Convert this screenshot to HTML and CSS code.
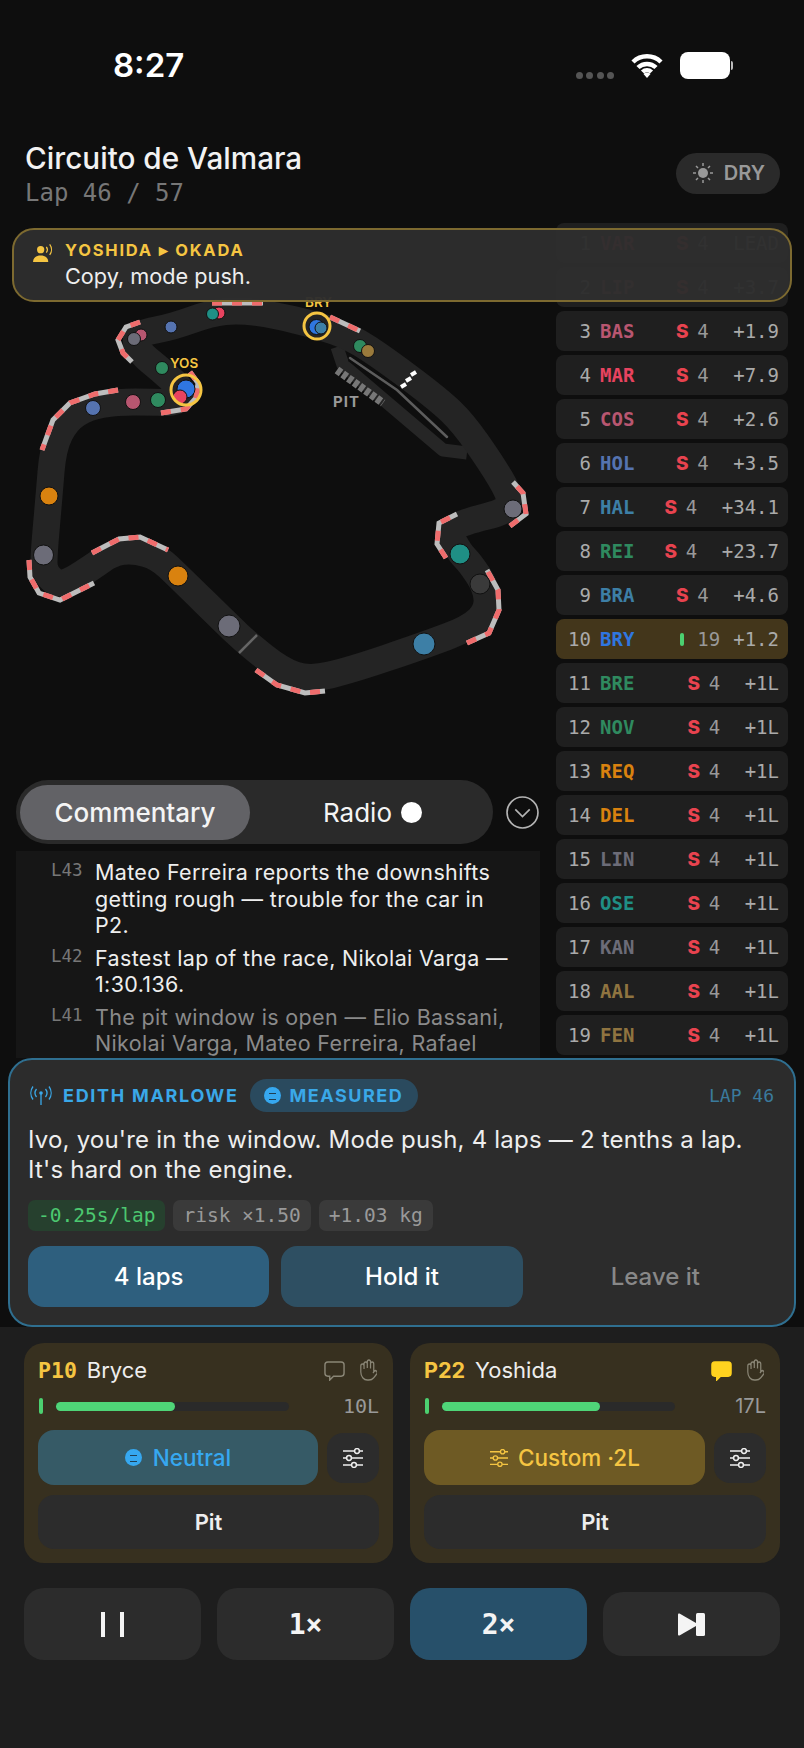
FILE: index.html
```html
<!DOCTYPE html>
<html lang="en">
<head>
    <meta charset="UTF-8">
    <meta name="viewport" content="width=device-width, initial-scale=1.0">
    <title>Circuito de Valmara</title>
    <link rel="stylesheet" href="styles.css">
</head>
<body>
    <svg class="sprites" width="0" height="0">
        <symbol id="i-hand" viewBox="2 1 21 22" preserveAspectRatio="none">
            <path transform="matrix(-1 0 0 1 25 0)" d="M18 11V6a2 2 0 0 0-2-2a2 2 0 0 0-2 2M14 10V4a2 2 0 0 0-2-2a2 2 0 0 0-2 2v2M10 10.5V6a2 2 0 0 0-2-2a2 2 0 0 0-2 2v8M18 8a2 2 0 1 1 4 0v6a8 8 0 0 1-8 8h-2c-2.8 0-4.5-.86-5.99-2.34l-3.6-3.6a2 2 0 0 1 2.83-2.82L7 15"/>
        </symbol>
        <symbol id="i-chat" viewBox="0 0 22 22">
            <path d="M4 2h14a3 3 0 0 1 3 3v9a3 3 0 0 1-3 3H10l-4 4v-4H4a3 3 0 0 1-3-3V5a3 3 0 0 1 3-3z"/>
        </symbol>
        <symbol id="i-sliders" viewBox="0 0 22 20">
            <path d="M1 3h20M1 10h20M1 17h20"/>
            <circle cx="15" cy="3" r="2.4"/>
            <circle cx="7" cy="10" r="2.4"/>
            <circle cx="12" cy="17" r="2.4"/>
        </symbol>
    </svg>

    <div class="phone">
        <div class="status-bar">
            <span class="clock">8:27</span>
            <div class="status-icons">
                <div class="signal"><i></i><i></i><i></i><i></i></div>
                <svg class="wifi" viewBox="0 0 32 25">
                    <path d="M2 9a20 20 0 0 1 28 0M7 14.500a13 13 0 0 1 18 0M11.500 19a6.500 6.500 0 0 1 9 0"/>
                    <path class="wifi-tip" d="M16 25l-3.500-4a5 5 0 0 1 7 0z"/>
                </svg>
                <div class="battery"></div>
            </div>
        </div>

        <header class="race-header">
            <div class="race-title">
                <h1>Circuito de Valmara</h1>
                <p class="lap-count">Lap 46 / 57</p>
            </div>
            <div class="weather">
                <svg viewBox="0 0 22 22">
                    <circle class="sun-core" cx="11" cy="11" r="5"/>
                    <path d="M11 1v3M11 18v3M1 11h3M18 11h3M4 4l2 2M16 16l2 2M4 18l2-2M16 6l2-2"/>
                </svg>
                <span>DRY</span>
            </div>
        </header>

        <div class="radio-toast">
            <svg class="toast-icon" viewBox="0 0 22 20">
                <circle cx="8" cy="6" r="3.800"/>
                <path d="M0 19c0-4.500 3-7 8-7s8 2.500 8 7z"/>
                <path class="wave" d="M14 3a5 5 0 0 1 0 6M17.500 .5a9 9 0 0 1 0 11"/>
            </svg>
            <div>
                <div class="toast-title">YOSHIDA ▸ OKADA</div>
                <div class="toast-text">Copy, mode push.</div>
            </div>
        </div>

        <main class="race-main">
            <section class="left-col">
                <svg class="track-map" viewBox="16 -67 524 547">
                    <defs>
                        <g id="kerbs">
                            <polyline points="256,380 277,395 305,403 325,401"/>
                            <polyline points="467,353 489,343 499,320 498,300 487,280"/>
                            <polyline points="446,268 437,254 439,233 457,224"/>
                            <polyline points="510,236 526,224 523,203 513,192"/>
                            <polyline points="330,27 360,41"/>
                            <polyline points="212,13 263,13"/>
                            <polyline points="140,32 126,37 118,50 123,63 132,72"/>
                            <polyline points="118,100 95,104 70,113 53,130 42,160"/>
                            <polyline points="161,123 186,119 196,108 198,93 190,82"/>
                            <polyline points="29,270 30,287 39,303 60,310 94,293"/>
                            <polyline points="92,263 119,249 140,247 168,260"/>
                        </g>
                    </defs>
                    <polyline class="pit-road" points="337,57 343,75 390,115 443,160 467,163"/>
                    <path class="track" d="M264,366.500 Q281,380 295,385 Q309,390 330,385 Q351,380 388,367.500 Q425,355 447.500,346.500 Q470,338 479,329 Q488,320 487,308.500 Q486,297 478,285 Q470,273 465,268 Q460,263 454.500,253 Q449,243 454.500,238 Q460,233 486,226.500 Q512,220 510.500,211.500 Q509,203 500,188 Q491,173 477,153 Q463,133 451,121.500 Q439,110 412.500,90 Q386,70 368.500,58.500 Q351,47 333.500,41 Q316,35 295,30 Q274,25 256.500,22.500 Q239,20 225,21.500 Q211,23 191.500,30 Q172,37 156,40 Q140,43 137.500,46.500 Q135,50 137.500,56.500 Q140,63 150.500,71.500 Q161,80 173.500,91.500 Q186,103 180.500,108 Q175,113 164.500,112.500 Q154,112 135,112 Q116,112 102,114.500 Q88,117 77.500,123.500 Q67,130 60,143.500 Q53,157 51,182 Q49,207 46.500,235 Q44,263 44,273 Q44,283 52.500,290 Q61,297 76,287.500 Q91,278 101.500,270.500 Q112,263 122.500,261.500 Q133,260 145.500,263.500 Q158,267 168.500,277 Q179,287 203.500,311 Q228,335 237.500,344 Q247,353 264,366.500 Z"/>
                    <polyline class="pit-gap" points="350,68 397,100 447,147"/>
                    <polyline class="pit-wall" points="350,68 397,100 447,147"/>
                    <line class="pit-boxes" x1="337" y1="80" x2="383" y2="113"/>
                    <g class="pit-entry">
                        <line x1="401" y1="97" x2="406" y2="94"/>
                        <line x1="406" y1="91" x2="411" y2="88"/>
                        <line x1="411" y1="85" x2="416" y2="82"/>
                    </g>
                    <line class="finish" x1="239" y1="363" x2="257" y2="345"/>
                    <use class="kerb-base" href="#kerbs"/>
                    <use class="kerb-dash" href="#kerbs"/>

                    <text class="pit-label" x="333" y="117">PIT</text>
                    <text class="car-label" x="170" y="78">YOS</text>
                    <text class="car-label" x="305" y="17">BRY</text>

                    <g class="cars">
                        <circle class="c-orange" cx="49" cy="206" r="9"/>
                        <circle class="c-grey" cx="43.500" cy="265" r="10"/>
                        <circle class="c-orange" cx="178" cy="286" r="10"/>
                        <circle class="c-grey" cx="229" cy="336" r="11"/>
                        <circle class="c-sky" cx="424" cy="354" r="11"/>
                        <circle class="c-dark" cx="480" cy="294" r="10"/>
                        <circle class="c-teal" cx="460" cy="264" r="10"/>
                        <circle class="c-grey" cx="513" cy="219" r="9"/>
                        <circle class="c-green" cx="360" cy="56" r="6.500"/>
                        <circle class="c-brown" cx="368" cy="61" r="6.500"/>
                        <circle class="c-red" cx="219" cy="23" r="6"/>
                        <circle class="c-teal" cx="212.500" cy="24" r="6"/>
                        <circle class="c-blue" cx="171" cy="37" r="6"/>
                        <circle class="c-pink" cx="141" cy="45" r="6"/>
                        <circle class="c-grey" cx="134" cy="49" r="6.500"/>
                        <circle class="c-green" cx="162" cy="78" r="6.500"/>
                        <circle class="c-green" cx="158" cy="110" r="7.500"/>
                        <circle class="c-pink" cx="133" cy="112" r="7.500"/>
                        <circle class="c-blue" cx="93" cy="118" r="7.500"/>
                        <circle class="c-bright" cx="316.500" cy="37" r="7.500"/>
                        <circle class="c-sky" cx="321" cy="38" r="6"/>
                        <circle class="c-bright" cx="186" cy="99" r="9"/>
                        <circle class="c-red" cx="180" cy="107" r="7"/>
                    </g>
                    <circle class="car-ring" cx="317" cy="36" r="13"/>
                    <circle class="car-ring" cx="186" cy="100" r="15"/>
                </svg>

                <div class="feed-tabs-row">
                    <div class="feed-tabs">
                        <div class="feed-tab active">Commentary</div>
                        <div class="feed-tab radio">Radio <span class="live-dot"></span></div>
                    </div>
                    <svg class="collapse" viewBox="0 0 32 32">
                        <circle cx="16" cy="16" r="15"/>
                        <path d="M9 13l7 7 7-7"/>
                    </svg>
                </div>

                <div class="feed">
                    <div class="feed-item">
                        <span class="feed-lap">L43</span>
                        <p>Mateo Ferreira reports the downshifts getting rough — trouble for the car in P2.</p>
                    </div>
                    <div class="feed-item">
                        <span class="feed-lap">L42</span>
                        <p>Fastest lap of the race, Nikolai Varga — 1:30.136.</p>
                    </div>
                    <div class="feed-item faded">
                        <span class="feed-lap">L41</span>
                        <p>The pit window is open — Elio Bassani, Nikolai Varga, Mateo Ferreira, Rafael</p>
                    </div>
                </div>
            </section>

            <aside class="standings">
                <div class="row"><span class="pos">1</span><span class="code c-red">VAR</span><span class="tyre">S</span><span class="laps">4</span><span class="gap">LEAD</span></div>
                <div class="row"><span class="pos">2</span><span class="code c-pink">LIP</span><span class="tyre">S</span><span class="laps">4</span><span class="gap">+3.7</span></div>
                <div class="row"><span class="pos">3</span><span class="code c-pink">BAS</span><span class="tyre">S</span><span class="laps">4</span><span class="gap">+1.9</span></div>
                <div class="row"><span class="pos">4</span><span class="code c-red">MAR</span><span class="tyre">S</span><span class="laps">4</span><span class="gap">+7.9</span></div>
                <div class="row"><span class="pos">5</span><span class="code c-pink">COS</span><span class="tyre">S</span><span class="laps">4</span><span class="gap">+2.6</span></div>
                <div class="row"><span class="pos">6</span><span class="code c-blue">HOL</span><span class="tyre">S</span><span class="laps">4</span><span class="gap">+3.5</span></div>
                <div class="row"><span class="pos">7</span><span class="code c-sky">HAL</span><span class="tyre">S</span><span class="laps">4</span><span class="gap">+34.1</span></div>
                <div class="row"><span class="pos">8</span><span class="code c-green">REI</span><span class="tyre">S</span><span class="laps">4</span><span class="gap">+23.7</span></div>
                <div class="row"><span class="pos">9</span><span class="code c-sky">BRA</span><span class="tyre">S</span><span class="laps">4</span><span class="gap">+4.6</span></div>
                <div class="row mine"><span class="pos">10</span><span class="code c-bright">BRY</span><span class="tyre"><i class="tyre-bar"></i></span><span class="laps">19</span><span class="gap">+1.2</span></div>
                <div class="row"><span class="pos">11</span><span class="code c-green">BRE</span><span class="tyre">S</span><span class="laps">4</span><span class="gap">+1L</span></div>
                <div class="row"><span class="pos">12</span><span class="code c-green">NOV</span><span class="tyre">S</span><span class="laps">4</span><span class="gap">+1L</span></div>
                <div class="row"><span class="pos">13</span><span class="code c-orange">REQ</span><span class="tyre">S</span><span class="laps">4</span><span class="gap">+1L</span></div>
                <div class="row"><span class="pos">14</span><span class="code c-orange">DEL</span><span class="tyre">S</span><span class="laps">4</span><span class="gap">+1L</span></div>
                <div class="row"><span class="pos">15</span><span class="code c-grey">LIN</span><span class="tyre">S</span><span class="laps">4</span><span class="gap">+1L</span></div>
                <div class="row"><span class="pos">16</span><span class="code c-teal">OSE</span><span class="tyre">S</span><span class="laps">4</span><span class="gap">+1L</span></div>
                <div class="row"><span class="pos">17</span><span class="code c-grey">KAN</span><span class="tyre">S</span><span class="laps">4</span><span class="gap">+1L</span></div>
                <div class="row"><span class="pos">18</span><span class="code c-brown">AAL</span><span class="tyre">S</span><span class="laps">4</span><span class="gap">+1L</span></div>
                <div class="row"><span class="pos">19</span><span class="code c-brown">FEN</span><span class="tyre">S</span><span class="laps">4</span><span class="gap">+1L</span></div>
            </aside>
        </main>

        <section class="engineer-card">
            <div class="engineer-head">
                <svg class="antenna" viewBox="0 0 22 20">
                    <circle cx="11" cy="7" r="1.800"/>
                    <path d="M11 8v11M6.500 3a6.500 6.500 0 0 0 0 8M15.500 3a6.500 6.500 0 0 1 0 8M3 .5a11 11 0 0 0 0 13M19 .5a11 11 0 0 1 0 13"/>
                </svg>
                <span class="engineer-name">EDITH MARLOWE</span>
                <span class="tone"><i class="neutral-dot"></i>MEASURED</span>
                <span class="engineer-lap">LAP 46</span>
            </div>
            <p class="engineer-msg">Ivo, you're in the window. Mode push, 4 laps — 2 tenths a lap. It's hard on the engine.</p>
            <div class="chips">
                <span class="chip good">-0.25s/lap</span>
                <span class="chip">risk ×1.50</span>
                <span class="chip">+1.03 kg</span>
            </div>
            <div class="answers">
                <button class="answer primary">4 laps</button>
                <button class="answer secondary">Hold it</button>
                <button class="answer plain">Leave it</button>
            </div>
        </section>

        <footer class="controls">
            <div class="drivers">
                <div class="driver-card">
                    <div class="driver-head">
                        <span class="driver-pos mono">P10</span>
                        <span class="driver-name">Bryce</span>
                        <svg class="chat"><use href="#i-chat"/></svg>
                        <svg class="hand"><use href="#i-hand"/></svg>
                    </div>
                    <div class="meter">
                        <i class="meter-tick"></i>
                        <div class="meter-track"><div class="meter-fill" style="width: 51%"></div></div>
                        <span class="meter-laps mono">10L</span>
                    </div>
                    <div class="mode-row">
                        <button class="mode neutral"><i class="neutral-dot"></i>Neutral</button>
                        <button class="tune"><svg class="sliders"><use href="#i-sliders"/></svg></button>
                    </div>
                    <button class="pit">Pit</button>
                </div>

                <div class="driver-card">
                    <div class="driver-head">
                        <span class="driver-pos">P22</span>
                        <span class="driver-name">Yoshida</span>
                        <svg class="chat on"><use href="#i-chat"/></svg>
                        <svg class="hand"><use href="#i-hand"/></svg>
                    </div>
                    <div class="meter">
                        <i class="meter-tick"></i>
                        <div class="meter-track"><div class="meter-fill" style="width: 68%"></div></div>
                        <span class="meter-laps">17L</span>
                    </div>
                    <div class="mode-row">
                        <button class="mode custom"><svg class="sliders"><use href="#i-sliders"/></svg>Custom ·2L</button>
                        <button class="tune"><svg class="sliders"><use href="#i-sliders"/></svg></button>
                    </div>
                    <button class="pit">Pit</button>
                </div>
            </div>

            <div class="playback">
                <button class="play-btn">
                    <svg class="pause" viewBox="0 0 23 25"><path d="M0 0h4v25H0zM19 0h4v25h-4z"/></svg>
                </button>
                <button class="play-btn">1×</button>
                <button class="play-btn active">2×</button>
                <button class="play-btn small">
                    <svg class="skip" viewBox="0 0 27 23"><path d="M0 1.500Q0 0 1.500 .6L18 10v3L1.500 22.400Q0 23 0 21.500z"/><rect x="18" width="9" height="23" rx="1.500"/></svg>
                </button>
            </div>
        </footer>
    </div>
</body>
</html>
```

FILE: styles.css
```css
* {
    box-sizing: border-box;
}

body {
    margin: 0;
    background-color: #0e0e0e;
    color: #eee;
    font-family: Inter, "Noto Sans", sans-serif;
}

.sprites {
    position: absolute;
}

.mono {
    font-family: "DejaVu Sans Mono", monospace;
}

.phone {
    position: relative;
    width: 804px;
    height: 1748px;
    overflow: hidden;
}

/* Status bar */
.status-bar {
    display: flex;
    justify-content: space-between;
    align-items: center;
    height: 130px;
    padding: 0 74px 0 113px;
}

.clock {
    font-size: 33px;
    font-weight: 600;
    color: #fff;
}

.status-icons {
    display: flex;
    align-items: center;
    gap: 16px;
}

.signal {
    display: flex;
    gap: 3.500px;
    margin-top: 20px;
}

.signal i {
    width: 7px;
    height: 7px;
    border-radius: 50%;
    background-color: #555;
}

.wifi {
    width: 34px;
    height: 25px;
}

.wifi path {
    fill: none;
    stroke: #fff;
    stroke-width: 4.500;
}

.wifi .wifi-tip {
    fill: #fff;
    stroke: none;
}

.battery {
    position: relative;
    width: 50px;
    height: 27px;
    border-radius: 8px;
    background-color: #fff;
}

.battery::after {
    content: "";
    position: absolute;
    left: 51px;
    top: 9px;
    width: 2px;
    height: 9px;
    border-radius: 0 2px 2px 0;
    background-color: #bbb;
}

/* Header */
.race-header {
    display: flex;
    justify-content: space-between;
    align-items: center;
    height: 93px;
    padding: 0 24px 7px 25px;
}

.race-title {
    margin-top: 2px;
}

h1 {
    margin: 0;
    font-size: 29.700px;
    line-height: 34px;
    font-weight: 500;
    color: #f2f2f2;
}

.lap-count {
    margin: 4px 0 0;
    font-family: "DejaVu Sans Mono", monospace;
    font-size: 24px;
    line-height: 28px;
    color: #777;
}

.weather {
    display: flex;
    align-items: center;
    gap: 10px;
    height: 41px;
    padding: 0 15px 0 16px;
    border-radius: 21px;
    background-color: #2a2a2a;
    font-size: 20px;
    font-weight: 600;
    color: #999;
}

.weather svg {
    width: 22px;
    height: 22px;
}

.weather path {
    stroke: #999;
    stroke-width: 1.500;
}

.sun-core {
    fill: #999;
}

/* Radio toast */
.radio-toast {
    position: absolute;
    left: 12px;
    top: 228px;
    z-index: 2;
    display: flex;
    gap: 11px;
    width: 780px;
    height: 74px;
    padding: 10px 19px;
    border: 2px solid #7d6a30;
    border-radius: 22px;
    background-color: rgba(45, 45, 45, 0.97);
}

.toast-icon {
    flex: none;
    width: 21px;
    height: 19px;
    margin-top: 4px;
    fill: #f5c542;
}

.toast-icon .wave {
    fill: none;
    stroke: #f5c542;
    stroke-width: 1.300;
}

.toast-title {
    font-size: 16.500px;
    line-height: 20px;
    font-weight: 700;
    letter-spacing: 1.800px;
    color: #f5c542;
}

.toast-text {
    margin-top: 3px;
    font-size: 21.700px;
    line-height: 26px;
    color: #eee;
}

/* Main area */
.race-main {
    display: grid;
    grid-template-columns: 524px 232px;
    gap: 16px;
    height: 835px;
    padding: 0 16px;
    overflow: hidden;
}

.left-col {
    display: flex;
    flex-direction: column;
    min-height: 0;
}

.track-map {
    flex: none;
    width: 524px;
    height: 547px;
}

.track {
    fill: none;
    stroke: #242424;
    stroke-width: 27;
    stroke-linejoin: round;
}

.pit-road {
    fill: none;
    stroke: #262626;
    stroke-width: 13;
    stroke-linejoin: round;
}

.pit-gap {
    fill: none;
    stroke: #0e0e0e;
    stroke-width: 7;
}

.pit-wall {
    fill: none;
    stroke: #5c5c5c;
    stroke-width: 2.500;
    stroke-linecap: round;
}

.pit-boxes {
    stroke: #777;
    stroke-width: 8;
    stroke-dasharray: 5 2;
}

.pit-entry line {
    stroke: #fff;
    stroke-width: 4;
}

.finish {
    stroke: #666;
    stroke-width: 2.500;
}

.kerb-base,
.kerb-dash {
    fill: none;
    stroke-width: 5;
}

.kerb-base {
    stroke: #bdbdbd;
}

.kerb-dash {
    stroke: #ef6c6c;
    stroke-dasharray: 10 10;
}

.pit-label {
    fill: #999;
    font-size: 15px;
    font-weight: 700;
    letter-spacing: 1px;
}

.car-label {
    fill: #f5c542;
    font-size: 13.500px;
    font-weight: 600;
}

.cars circle {
    stroke: #111;
    stroke-width: 1;
}

.car-ring {
    fill: none;
    stroke: #f5c542;
    stroke-width: 3;
}

/* Team colours, for car dots and driver codes */
.c-red { color: #e8435f; fill: #e8435f; }
.c-pink { color: #b85670; fill: #b85670; }
.c-blue { color: #5573b0; fill: #5573b0; }
.c-sky { color: #3d7fa6; fill: #3d7fa6; }
.c-bright { color: #2f76e0; fill: #2f76e0; }
.c-green { color: #2f8a5f; fill: #2f8a5f; }
.c-teal { color: #1f8f85; fill: #1f8f85; }
.c-orange { color: #d9820f; fill: #d9820f; }
.c-brown { color: #8f7440; fill: #9a7a3c; }
.c-grey { color: #6c6c78; fill: #6c6c78; }
.c-dark { fill: #3a3a3a; }

/* Commentary */
.feed-tabs-row {
    flex: none;
    display: flex;
    align-items: center;
    gap: 13px;
    margin-top: 10px;
}

.feed-tabs {
    display: flex;
    align-items: center;
    width: 477px;
    height: 64px;
    padding: 0 4px;
    border-radius: 32px;
    background-color: #2a2a2a;
}

.feed-tab {
    display: flex;
    justify-content: center;
    align-items: center;
    gap: 9px;
    flex: 1;
    height: 55px;
    border-radius: 28px;
    font-size: 26px;
    font-weight: 500;
    color: #f4f4f4;
}

.feed-tab.active {
    flex: none;
    width: 230px;
    background-color: #626266;
}

.feed-tab.radio {
    padding-left: 6px;
    font-weight: 400;
}

.live-dot {
    width: 21px;
    height: 21px;
    border-radius: 50%;
    background-color: #fff;
}

.collapse {
    flex: none;
    width: 33px;
    height: 33px;
    fill: none;
    stroke: #b4b4b4;
    stroke-width: 1.600;
}

.feed {
    flex: 1;
    min-height: 0;
    margin-top: 7px;
    padding: 8px 20px 0 35px;
    background-color: #161616;
    overflow: hidden;
}

.feed-item {
    display: flex;
    margin-bottom: 6px;
}

.feed-item p {
    margin: 0;
    font-size: 21.500px;
    line-height: 26.500px;
    letter-spacing: 0.350px;
}

.feed-lap {
    flex: none;
    width: 44px;
    font-family: "DejaVu Sans Mono", monospace;
    font-size: 17.500px;
    line-height: 22px;
    color: #777;
}

.faded p {
    color: #8a8a8a;
}

/* Standings */
.standings {
    display: flex;
    flex-direction: column;
    gap: 4px;
    font-family: "DejaVu Sans Mono", monospace;
    font-size: 19px;
    color: #aaa;
}

.row {
    flex: none;
    display: flex;
    align-items: center;
    height: 40px;
    padding-right: 9px;
    border-radius: 8px;
    background-color: #1f1f1f;
}

.row.mine {
    background-color: #43361b;
}

.pos {
    width: 35px;
    text-align: right;
}

.code {
    margin-left: 9px;
    font-weight: 700;
}

.tyre {
    display: flex;
    justify-content: center;
    width: 12px;
    margin-left: auto;
    font-family: Inter, sans-serif;
    font-size: 19px;
    font-weight: 800;
    color: #e8434f;
}

.tyre-bar {
    width: 3.500px;
    height: 13px;
    border-radius: 2px;
    background-color: #4cd070;
}

.laps {
    width: 23px;
    margin-left: 9px;
    color: #999;
}

.gap {
    margin-left: 13px;
}

/* Engineer card */
.engineer-card {
    position: relative;
    height: 269px;
    margin: 0 8px;
    padding: 19px 18px 0;
    border: 2px solid #2f6f90;
    border-radius: 24px;
    background-color: #2c2c2c;
    z-index: 1;
}

.engineer-head {
    display: flex;
    align-items: center;
    height: 33px;
}

.antenna {
    width: 22px;
    height: 20px;
    margin-left: 2px;
    fill: #3aa8e8;
}

.antenna path {
    fill: none;
    stroke: #3aa8e8;
    stroke-width: 1.300;
}

.engineer-name {
    margin-left: 11px;
    font-size: 18px;
    font-weight: 700;
    letter-spacing: 1.700px;
    color: #3aa8e8;
}

.tone {
    display: flex;
    align-items: center;
    gap: 9px;
    height: 33px;
    margin-left: 11px;
    padding: 0 15px 0 14px;
    border-radius: 17px;
    background-color: #2a4a5e;
    font-size: 18px;
    font-weight: 700;
    letter-spacing: 1.500px;
    color: #3aa8e8;
}

.neutral-dot {
    position: relative;
    flex: none;
    width: 17px;
    height: 17px;
    border-radius: 50%;
    background-color: #36a8f0;
}

.neutral-dot::after {
    content: "";
    position: absolute;
    left: 5px;
    top: 6px;
    width: 7px;
    height: 5px;
    border-top: 1.500px solid #1f3f54;
    border-bottom: 1.500px solid #1f3f54;
}

.engineer-lap {
    margin-left: auto;
    padding-right: 2px;
    font-family: "DejaVu Sans Mono", monospace;
    font-size: 18px;
    color: #3a7a9c;
}

.engineer-msg {
    max-width: 730px;
    margin: 13px 0 0;
    font-size: 24px;
    line-height: 29.500px;
    letter-spacing: 0.200px;
    color: #eee;
}

.chips {
    display: flex;
    gap: 8px;
    margin-top: 16px;
}

.chip {
    height: 31px;
    padding: 0 10px;
    border-radius: 7px;
    background-color: #3a3a3a;
    font-family: "DejaVu Sans Mono", monospace;
    font-size: 19.500px;
    line-height: 31px;
    color: #999;
}

.chip.good {
    background-color: #26402e;
    color: #4cc870;
}

.answers {
    display: flex;
    gap: 12px;
    margin-top: 15px;
}

.answer {
    flex: 1;
    height: 61px;
    border: none;
    border-radius: 16px;
    font-family: Inter, sans-serif;
    font-size: 24px;
    font-weight: 500;
    color: #fff;
}

.answer.primary {
    background-color: #2e5f7e;
}

.answer.secondary {
    background-color: #2e4f62;
}

.answer.plain {
    background: none;
    color: #888;
}

/* Driver controls */
.controls {
    height: 421px;
    margin-top: 0;
    padding: 16px 24px 0;
    background-color: #1e1e1e;
}

.drivers {
    display: grid;
    grid-template-columns: 369px 370px;
    gap: 17px;
}

.driver-card {
    height: 220px;
    padding: 13px 14px;
    border-radius: 20px;
    background-color: #37301f;
}

.driver-head {
    display: flex;
    align-items: center;
    height: 28px;
}

.driver-pos {
    font-size: 21.500px;
    font-weight: 700;
    color: #f5c542;
}

.driver-name {
    margin-left: 10px;
    font-size: 22px;
    font-weight: 400;
    color: #eee;
}

.chat {
    width: 21px;
    height: 21px;
    margin-left: auto;
    fill: none;
    stroke: #8a8676;
    stroke-width: 1.500;
}

.chat.on {
    fill: #ffd21f;
    stroke: #ffd21f;
}

.hand {
    width: 17px;
    height: 22px;
    margin-left: 15px;
    margin-right: 2px;
    fill: none;
    stroke: #8a8676;
    stroke-width: 1.500;
}

.meter {
    display: flex;
    align-items: center;
    height: 16px;
    margin-top: 14px;
}

.meter-tick {
    width: 4px;
    height: 16px;
    margin-left: 1px;
    margin-right: 13px;
    border-radius: 2px;
    background-color: #4cd070;
}

.meter-track {
    width: 233px;
    height: 9px;
    border-radius: 5px;
    background-color: #2a2a2a;
}

.meter-fill {
    height: 100%;
    border-radius: 5px;
    background-color: #4fd578;
}

.meter-laps {
    margin-left: auto;
    font-size: 20px;
    color: #999;
}

.mode-row {
    display: flex;
    align-items: center;
    gap: 9px;
    margin-top: 16px;
}

.mode {
    display: flex;
    justify-content: center;
    align-items: center;
    gap: 11px;
    flex: 1;
    height: 55px;
    border: none;
    border-radius: 16px;
    font-family: Inter, sans-serif;
    font-size: 22.500px;
    font-weight: 500;
}

.mode.neutral {
    background-color: #365a66;
    color: #36a8f0;
}

.mode.custom {
    gap: 9px;
    background-color: #6e5a24;
    color: #f5c542;
}

.sliders {
    width: 22px;
    height: 20px;
    fill: #2c2c2c;
    stroke: #eee;
    stroke-width: 1.500;
}

.custom .sliders {
    width: 20px;
    height: 18px;
    fill: #6e5a24;
    stroke: #f5c542;
}

.tune {
    flex: none;
    display: flex;
    justify-content: center;
    align-items: center;
    width: 52px;
    height: 50px;
    padding: 0;
    border: none;
    border-radius: 16px;
    background-color: #2c2c2c;
}

.pit {
    width: 100%;
    height: 54px;
    margin-top: 10px;
    border: none;
    border-radius: 16px;
    background-color: #2c2c2c;
    font-family: Inter, sans-serif;
    font-size: 22px;
    font-weight: 600;
    color: #eee;
}

/* Playback */
.playback {
    display: grid;
    grid-template-columns: repeat(4, 177px);
    align-items: center;
    gap: 16px;
    margin-top: 25px;
}

.play-btn {
    display: flex;
    justify-content: center;
    align-items: center;
    height: 72px;
    border: none;
    border-radius: 20px;
    background-color: #2c2c2c;
    font-family: "DejaVu Sans Mono", monospace;
    font-size: 28px;
    font-weight: 700;
    color: #f4f4f4;
}

.play-btn.active {
    background-color: #27506a;
}

.play-btn.small {
    height: 64px;
}

.pause {
    width: 23px;
    height: 25px;
    fill: #f4f4f4;
}

.skip {
    width: 27px;
    height: 23px;
    fill: #f4f4f4;
}
```
